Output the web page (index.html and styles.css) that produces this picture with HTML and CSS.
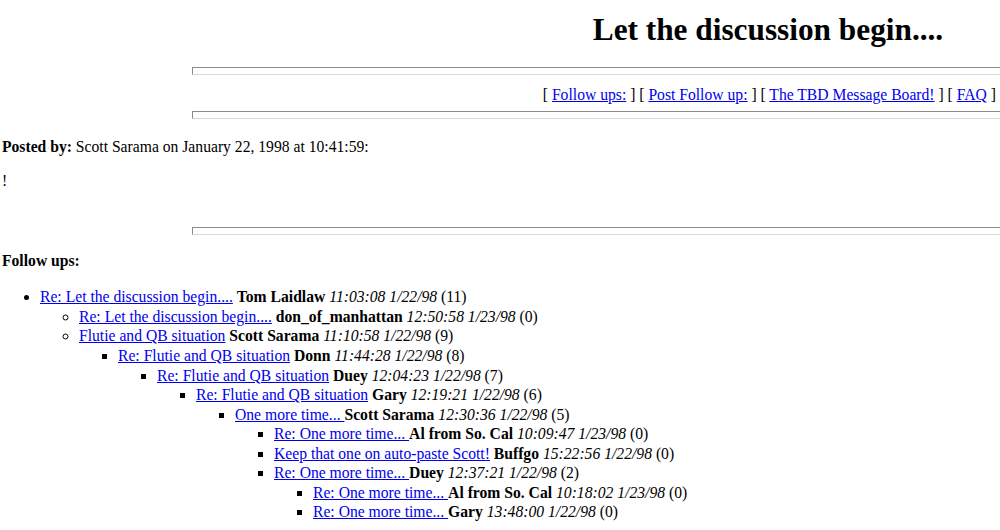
FILE: index.html
```html
<!DOCTYPE html>
<html lang="en">
<head>
  <meta charset="UTF-8" />
  <title>Let the discussion begin....</title>
  <link rel="stylesheet" href="styles.css">
</head>
<body>

<div class="band">
  <h1 class="title">Let the discussion begin....</h1>
  <hr>
</div>

<p class="links">
  [ <a href="#followups">Follow ups:</a> ] [ <a href="#postfp">Post Follow up:</a> ] [ <a href="#">The TBD Message Board!</a> ] [ <a href="#">FAQ</a> ]
</p>

<div class="band band-mid">
  <hr>
</div>

<p class="posted"><b>Posted by:</b> Scott Sarama on January 22, 1998 at 10:41:59:</p>

<p class="body-text">!</p>

<div class="band band-low">
  <hr>
</div>

<p class="follow-title" id="followups"><b>Follow ups:</b></p>

<ul class="thread">
  <li><a href="#">Re: Let the discussion begin....</a> <b>Tom Laidlaw</b> <i>11:03:08 1/22/98</i> (11)
    <ul>
      <li><a href="#">Re: Let the discussion begin....</a> <b>don_of_manhattan</b> <i>12:50:58 1/23/98</i> (0)</li>
      <li><a href="#">Flutie and QB situation</a> <b>Scott Sarama</b> <i>11:10:58 1/22/98</i> (9)
        <ul>
          <li><a href="#">Re: Flutie and QB situation</a> <b>Donn</b> <i>11:44:28 1/22/98</i> (8)
            <ul>
              <li><a href="#">Re: Flutie and QB situation</a> <b>Duey</b> <i>12:04:23 1/22/98</i> (7)
                <ul>
                  <li><a href="#">Re: Flutie and QB situation</a> <b>Gary</b> <i>12:19:21 1/22/98</i> (6)
                    <ul>
                      <li><a href="#">One more time... </a><b>Scott Sarama</b> <i>12:30:36 1/22/98</i> (5)
                        <ul>
                          <li><a href="#">Re: One more time... </a><b>Al from So. Cal</b> <i>10:09:47 1/23/98</i> (0)</li>
                          <li><a href="#">Keep that one on auto-paste Scott!</a> <b>Buffgo</b> <i>15:22:56 1/22/98</i> (0)</li>
                          <li><a href="#">Re: One more time... </a><b>Duey</b> <i>12:37:21 1/22/98</i> (2)
                            <ul>
                              <li><a href="#">Re: One more time... </a><b>Al from So. Cal</b> <i>10:18:02 1/23/98</i> (0)</li>
                              <li><a href="#">Re: One more time... </a><b>Gary</b> <i>13:48:00 1/22/98</i> (0)</li>
                            </ul>
                          </li>
                        </ul>
                      </li>
                    </ul>
                  </li>
                </ul>
              </li>
            </ul>
          </li>
        </ul>
      </li>
    </ul>
  </li>
</ul>

</body>
</html>
```

FILE: styles.css
```css
html, body {
  overflow: hidden;
}
body {
  font-family: "Liberation Serif", "Times New Roman", serif;
  font-size: 15.65px;
  line-height: 19.6px;
  color: #000;
  background: #fff;
  margin: 0;
  padding: 0 0 0 2px;
}
a {
  color: #0000ee;
}
.band {
  margin-left: 190px;
}
.title {
  font-size: 31.3px;
  line-height: 37px;
  text-align: center;
  margin: 11px 0 0;
  padding-left: 344px;
}
hr {
  height: 6px;
  margin: 19px 0 0;
  border: 1px solid;
  border-right: 0;
  border-color: #8a8a8a #d8d8d8 #d8d8d8 #8a8a8a;
  background: #fff;
}
.links {
  text-align: right;
  margin: 10px 0 0;
  padding-right: 4px;
}
.band-mid hr {
  margin-top: 6px;
}
.posted {
  margin: 18px 0 0;
}
.body-text {
  margin: 15px 0 0;
}
.band-low hr {
  margin-top: 36px;
}
.follow-title {
  margin: 16px 0 0;
}
.thread {
  margin: 17px 0 0;
  padding-left: 38px;
  line-height: 19.55px;
}
.thread ul {
  margin: 0;
  padding-left: 39px;
}
```
